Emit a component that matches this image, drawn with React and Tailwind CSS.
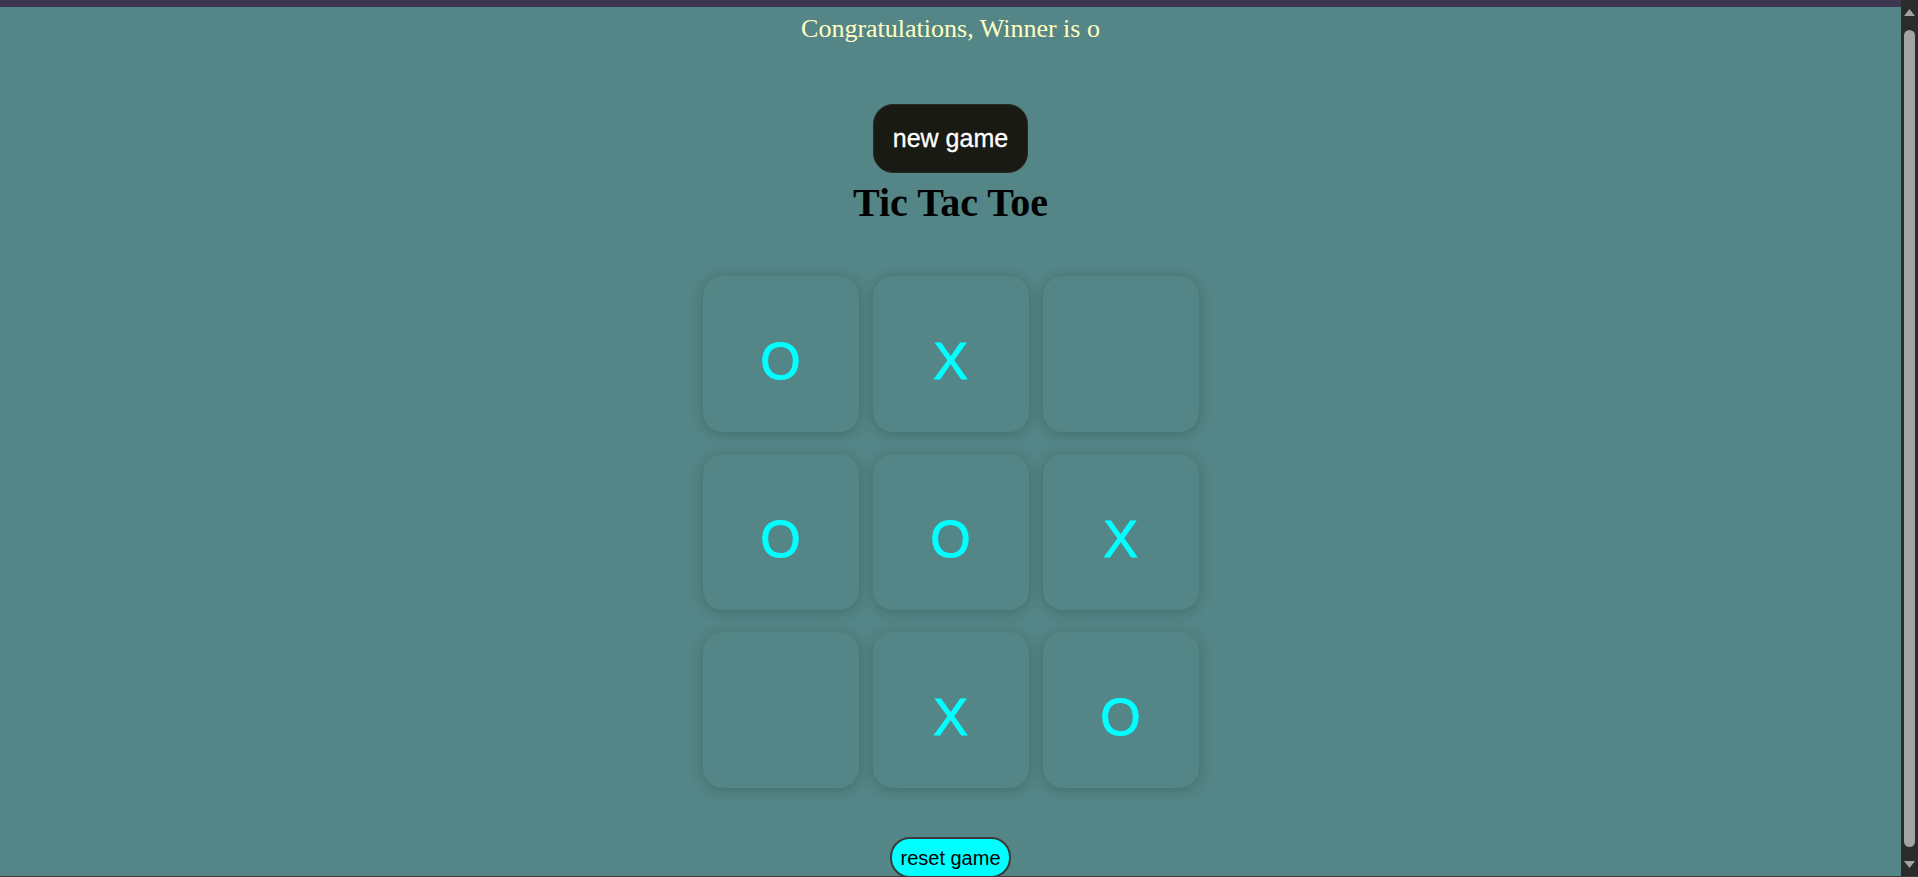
import React from "react";

const board = ["O", "X", "", "O", "O", "X", "", "X", "O"];

function Cell({ v }) {
  return (
    <div className="w-[156px] h-[156px] rounded-[20px] bg-[#548687] shadow-[0_2px_14px_rgba(0,0,0,0.2)] flex items-center justify-center pt-[14px]">
      <span className="text-[52px] leading-[60px] text-[#00ffff] [-webkit-text-stroke:1px_#00ffff] font-['Liberation_Sans',Arial,sans-serif]">
        {v}
      </span>
    </div>
  );
}

function Scrollbar() {
  return (
    <div className="w-[17px] shrink-0 bg-[#2b2b2b] flex flex-col items-center">
      <svg width="17" height="17" viewBox="0 0 17 17" className="shrink-0 mt-[6px]">
        <polygon points="8.5,3 14,10 3,10" fill="#a3a3a3" />
      </svg>
      <div className="w-[11px] flex-1 mt-[7px] mb-[8px] rounded-full bg-[#a3a3a3]" />
      <svg width="17" height="17" viewBox="0 0 17 17" className="shrink-0 mb-[4px]">
        <polygon points="3,6 14,6 8.5,13" fill="#a3a3a3" />
      </svg>
    </div>
  );
}

export default function App() {
  return (
    <div className="w-full h-[877px] flex flex-col overflow-hidden">
      <div className="flex-1 min-h-0 flex flex-row">
        <div className="flex-1 min-w-0 overflow-hidden bg-[#548687] flex flex-col items-center">
          <div className="h-[7px] w-full shrink-0 bg-[#3e3650]" />
          <p className="mt-[7px] text-[26px] leading-[30px] text-[#ffffc2] font-['Liberation_Serif','Times_New_Roman',serif]">
            Congratulations, Winner is o
          </p>
          <button className="mt-[60px] w-[155px] h-[69px] shrink-0 rounded-[20px] bg-[#1a1a14] border border-[#2a2a22] text-white text-[25px] leading-[29px] [-webkit-text-stroke:0.3px_#ffffff] font-['Liberation_Sans',Arial,sans-serif] flex items-center justify-center">
            new game
          </button>
          <h1 className="mt-[7px] text-[40px] leading-[46px] font-bold text-black font-['Liberation_Serif','Times_New_Roman',serif]">
            Tic Tac Toe
          </h1>
          <div className="mt-[50px] grid grid-cols-[repeat(3,156px)] gap-x-[14px] gap-y-[22px] shrink-0">
            {board.map((v, i) => (
              <Cell key={i} v={v} />
            ))}
          </div>
          <button className="mt-[49px] shrink-0 px-[8px] pt-[8px] pb-[6px] rounded-[20px] bg-[#00ffff] border-2 border-[#3a3a3a] text-black text-[20px] leading-[23px] font-['Liberation_Sans',Arial,sans-serif]">
            reset game
          </button>
        </div>
        <Scrollbar />
      </div>
      <div className="h-px w-full shrink-0 bg-[#3f3f3f]" />
    </div>
  );
}
